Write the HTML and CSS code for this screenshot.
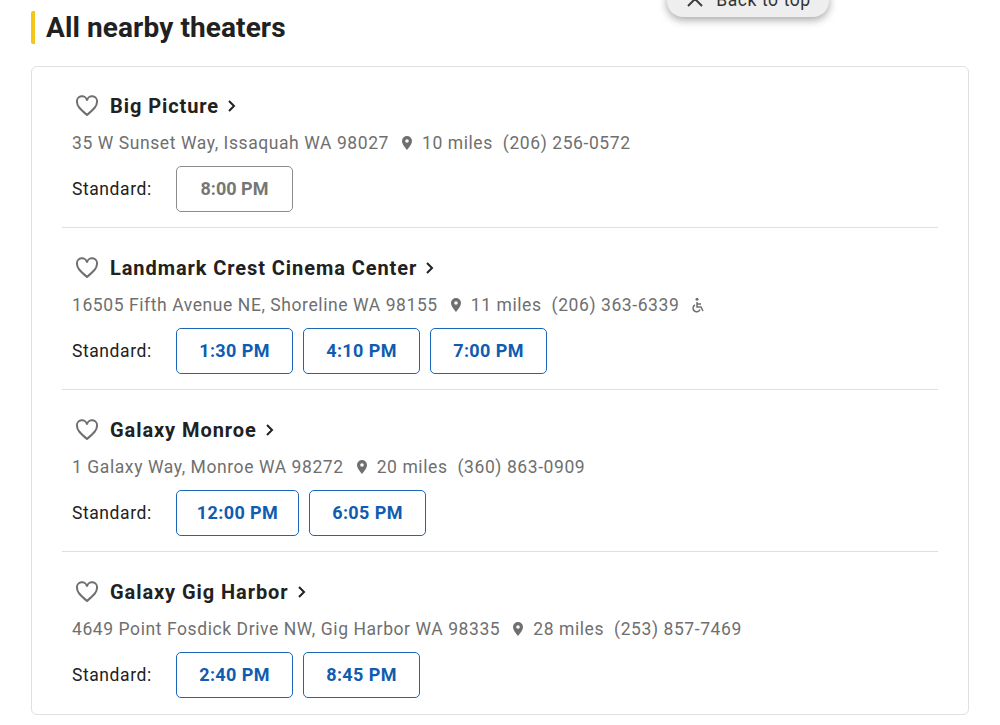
FILE: index.html
```html
<!DOCTYPE html>
<html lang="en">
<head>
  <meta charset="UTF-8" />
  <title>All nearby theaters</title>
  <link rel="stylesheet" href="styles.css">
</head>
<body>
  <button class="back-top">
    <svg class="back-icon" viewBox="0 0 20 20" width="20" height="20"><path d="M3 9l7-7 7 7M3 16l7-7 7 7" fill="none" stroke="#3c3c3c" stroke-width="2"/></svg>
    Back to top
  </button>

  <h1 class="page-title">All nearby theaters</h1>

  <div class="card">
    <!-- Big Picture -->
    <div class="theater">
      <div class="name-row">
        <svg class="heart" viewBox="0 0 24 22" width="24" height="22"><path d="M12 20C5 14 2 11 2 7a5 5 0 0 1 10-1.500A5 5 0 0 1 22 7c0 4-3 7-10 13z" fill="none" stroke="#6f6f6f" stroke-width="2"/></svg>
        <span class="name">Big Picture</span>
        <svg class="chev" viewBox="0 0 10 14" width="10" height="14"><path d="M2 2l5 5-5 5" fill="none" stroke="#222" stroke-width="2"/></svg>
      </div>
      <div class="info">
        <span>35 W Sunset Way, Issaquah WA 98027</span>
        <svg class="pin" viewBox="0 0 12 16" width="12" height="16"><path fill-rule="evenodd" d="M6 1a5 5 0 0 0-5 5c0 3.500 5 9 5 9s5-5.500 5-9a5 5 0 0 0-5-5zm0 6.800a1.800 1.800 0 1 1 0-3.600 1.800 1.800 0 0 1 0 3.600z" fill="#6f6f6f"/></svg>
        <span class="miles">10 miles</span>
        <span class="phone">(206) 256-0572</span>
      </div>
      <div class="times">
        <span class="label">Standard:</span>
        <a class="time past">8:00 PM</a>
      </div>
    </div>

    <!-- Landmark Crest -->
    <div class="theater">
      <div class="name-row">
        <svg class="heart" viewBox="0 0 24 22" width="24" height="22"><path d="M12 20C5 14 2 11 2 7a5 5 0 0 1 10-1.500A5 5 0 0 1 22 7c0 4-3 7-10 13z" fill="none" stroke="#6f6f6f" stroke-width="2"/></svg>
        <span class="name">Landmark Crest Cinema Center</span>
        <svg class="chev" viewBox="0 0 10 14" width="10" height="14"><path d="M2 2l5 5-5 5" fill="none" stroke="#222" stroke-width="2"/></svg>
      </div>
      <div class="info">
        <span>16505 Fifth Avenue NE, Shoreline WA 98155</span>
        <svg class="pin" viewBox="0 0 12 16" width="12" height="16"><path fill-rule="evenodd" d="M6 1a5 5 0 0 0-5 5c0 3.500 5 9 5 9s5-5.500 5-9a5 5 0 0 0-5-5zm0 6.800a1.800 1.800 0 1 1 0-3.600 1.800 1.800 0 0 1 0 3.600z" fill="#6f6f6f"/></svg>
        <span class="miles">11 miles</span>
        <span class="phone">(206) 363-6339</span>
        <svg class="access" viewBox="0 0 14 16" width="14" height="16"><circle cx="6" cy="2.200" r="1.500" fill="#6f6f6f"/><path d="M6 5v5h4l2 4M6 7h4M4 8a3.600 3.600 0 1 0 5 4.500" fill="none" stroke="#6f6f6f" stroke-width="1.500"/></svg>
      </div>
      <div class="times">
        <span class="label">Standard:</span>
        <a class="time">1:30 PM</a>
        <a class="time">4:10 PM</a>
        <a class="time">7:00 PM</a>
      </div>
    </div>

    <!-- Galaxy Monroe -->
    <div class="theater">
      <div class="name-row">
        <svg class="heart" viewBox="0 0 24 22" width="24" height="22"><path d="M12 20C5 14 2 11 2 7a5 5 0 0 1 10-1.500A5 5 0 0 1 22 7c0 4-3 7-10 13z" fill="none" stroke="#6f6f6f" stroke-width="2"/></svg>
        <span class="name">Galaxy Monroe</span>
        <svg class="chev" viewBox="0 0 10 14" width="10" height="14"><path d="M2 2l5 5-5 5" fill="none" stroke="#222" stroke-width="2"/></svg>
      </div>
      <div class="info">
        <span>1 Galaxy Way, Monroe WA 98272</span>
        <svg class="pin" viewBox="0 0 12 16" width="12" height="16"><path fill-rule="evenodd" d="M6 1a5 5 0 0 0-5 5c0 3.500 5 9 5 9s5-5.500 5-9a5 5 0 0 0-5-5zm0 6.800a1.800 1.800 0 1 1 0-3.600 1.800 1.800 0 0 1 0 3.600z" fill="#6f6f6f"/></svg>
        <span class="miles">20 miles</span>
        <span class="phone">(360) 863-0909</span>
      </div>
      <div class="times">
        <span class="label">Standard:</span>
        <a class="time wide">12:00 PM</a>
        <a class="time">6:05 PM</a>
      </div>
    </div>

    <!-- Galaxy Gig Harbor -->
    <div class="theater">
      <div class="name-row">
        <svg class="heart" viewBox="0 0 24 22" width="24" height="22"><path d="M12 20C5 14 2 11 2 7a5 5 0 0 1 10-1.500A5 5 0 0 1 22 7c0 4-3 7-10 13z" fill="none" stroke="#6f6f6f" stroke-width="2"/></svg>
        <span class="name">Galaxy Gig Harbor</span>
        <svg class="chev" viewBox="0 0 10 14" width="10" height="14"><path d="M2 2l5 5-5 5" fill="none" stroke="#222" stroke-width="2"/></svg>
      </div>
      <div class="info">
        <span>4649 Point Fosdick Drive NW, Gig Harbor WA 98335</span>
        <svg class="pin" viewBox="0 0 12 16" width="12" height="16"><path fill-rule="evenodd" d="M6 1a5 5 0 0 0-5 5c0 3.500 5 9 5 9s5-5.500 5-9a5 5 0 0 0-5-5zm0 6.800a1.800 1.800 0 1 1 0-3.600 1.800 1.800 0 0 1 0 3.600z" fill="#6f6f6f"/></svg>
        <span class="miles">28 miles</span>
        <span class="phone">(253) 857-7469</span>
      </div>
      <div class="times">
        <span class="label">Standard:</span>
        <a class="time">2:40 PM</a>
        <a class="time">8:45 PM</a>
      </div>
    </div>
  </div>
</body>
</html>
```

FILE: styles.css
```css
html, body {
  height: 725px;
  overflow: hidden;
}
body {
  margin: 0;
  padding: 11px 31px 0;
  background: #fff;
  color: #212121;
  font-family: Roboto, sans-serif;
}
.back-top {
  position: absolute;
  top: -18px;
  left: 667px;
  width: 162px;
  height: 35px;
  display: flex;
  align-items: center;
  justify-content: center;
  gap: 11px;
  padding: 0;
  border: none;
  border-radius: 16px;
  background: #eeeeee;
  color: #333;
  font-family: Roboto, sans-serif;
  font-size: 17.5px;
  letter-spacing: 0.6px;
  box-shadow: 0 3px 8px rgba(0, 0, 0, 0.35);
}
.page-title {
  margin: 0 0 22px;
  padding-left: 11px;
  height: 33px;
  line-height: 33px;
  border-left: 4px solid #f5c518;
  border-radius: 2px;
  font-size: 28px;
  font-weight: 700;
  letter-spacing: 0.1px;
}
.card {
  box-sizing: border-box;
  width: 938px;
  height: 649px;
  padding: 0 30px;
  border: 1px solid #e0e0e0;
  border-radius: 6px;
}
.theater {
  box-sizing: border-box;
  height: 162px;
  padding: 27px 10px 0;
  border-bottom: 1px solid #e0e0e0;
}
.theater:first-child {
  height: 161px;
  padding-top: 26px;
}
.theater:last-child {
  border-bottom: none;
}
.name-row {
  display: flex;
  align-items: center;
  height: 26px;
  padding-left: 3px;
}
.heart {
  margin-right: 11px;
}
.name {
  font-size: 20px;
  font-weight: 700;
  letter-spacing: 0.92px;
}
.chev {
  margin-left: 8px;
}
.info {
  display: flex;
  align-items: center;
  height: 24px;
  margin-top: 12px;
  color: #6f6f6f;
  font-size: 17.5px;
  letter-spacing: 0.58px;
}
.pin {
  margin-left: 12px;
  margin-right: 9px;
}
.phone {
  margin-left: 10px;
}
.access {
  margin-left: 12px;
}
.times {
  display: flex;
  align-items: center;
  gap: 10px;
  margin-top: 11px;
}
.label {
  width: 94px;
  font-size: 17.5px;
  letter-spacing: 0.58px;
}
.time {
  box-sizing: border-box;
  width: 117px;
  height: 46px;
  line-height: 44px;
  text-align: center;
  border: 1px solid #1c66b8;
  border-radius: 5px;
  color: #0f5cb0;
  font-size: 18px;
  font-weight: 700;
  letter-spacing: 0.4px;
}
.time.wide {
  width: 123px;
}
.time.past {
  border-color: #8c8c8c;
  color: #767676;
  letter-spacing: 0;
}
```
